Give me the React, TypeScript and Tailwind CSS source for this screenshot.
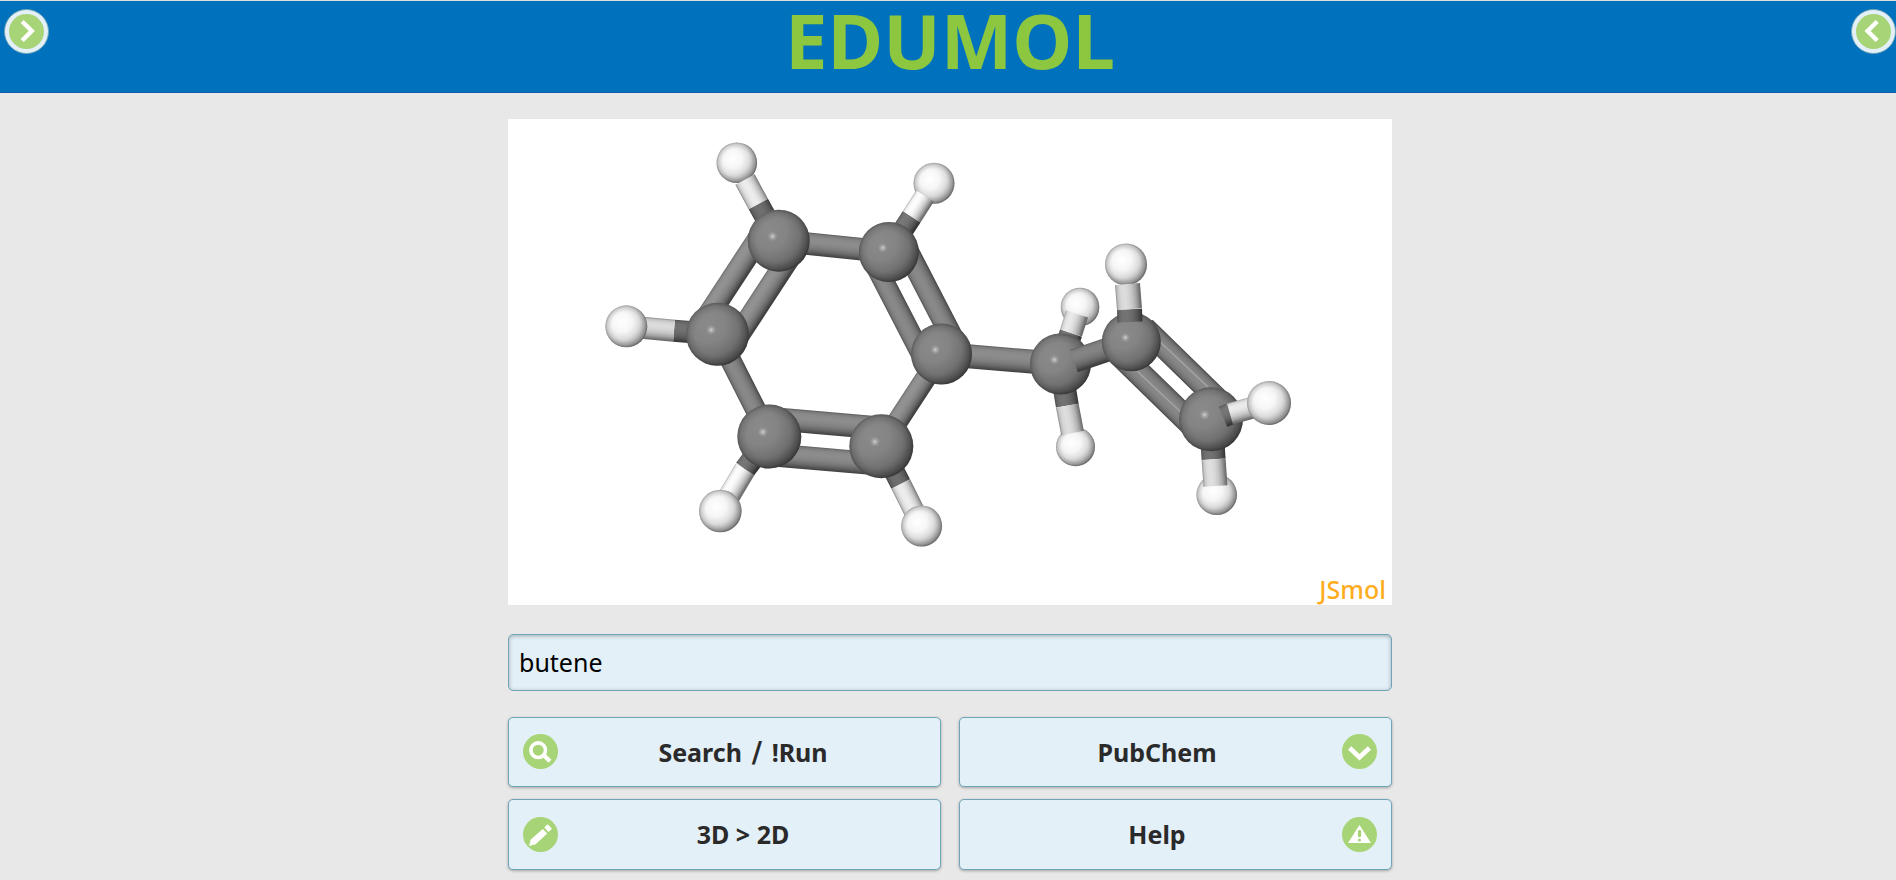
import React from "react";

type Point = { x: number; y: number };
type Atom = Point & { r: number; el: "C" | "H" };

const atoms: Record<string, Atom> = {
  c1: { x: 778.7, y: 240.7, r: 31, el: "C" },
  c2: { x: 888.8, y: 252, r: 30, el: "C" },
  c3: { x: 717.5, y: 334.3, r: 31.5, el: "C" },
  c4: { x: 941.5, y: 354, r: 30.5, el: "C" },
  c5: { x: 769.3, y: 436.5, r: 32, el: "C" },
  c6: { x: 881.3, y: 446.2, r: 32, el: "C" },
  c7: { x: 1060.5, y: 364, r: 30.5, el: "C" },
  c8: { x: 1131.3, y: 341.7, r: 29.5, el: "C" },
  c9: { x: 1211, y: 419.3, r: 32, el: "C" },
  h1: { x: 736.8, y: 162.7, r: 20.3, el: "H" },
  h2: { x: 934, y: 183.2, r: 20.5, el: "H" },
  h3: { x: 626.3, y: 326.3, r: 21, el: "H" },
  h4: { x: 720.3, y: 511, r: 21.3, el: "H" },
  h5: { x: 921.6, y: 526, r: 20.5, el: "H" },
  h6: { x: 1080, y: 307, r: 19.3, el: "H" },
  h7: { x: 1075.5, y: 446.7, r: 19.5, el: "H" },
  h8: { x: 1126, y: 264.4, r: 21, el: "H" },
  h9: { x: 1269, y: 403, r: 22, el: "H" },
  h10: { x: 1216.7, y: 494.7, r: 20.3, el: "H" },
};

const LIGHT = { x: -0.35, y: -0.35, z: 0.87 };

function tone(base: number, intensity: number) {
  const v = Math.min(255, Math.round(base * (0.42 + 0.56 * Math.max(0, intensity))));
  return `rgb(${v},${v},${v})`;
}

function Cylinder({ id, from, to, w, base, shift = 0 }: {
  id: string; from: Point; to: Point; w: number; base: number; shift?: number;
}) {
  const len = Math.hypot(to.x - from.x, to.y - from.y);
  const nx = -(to.y - from.y) / len;
  const ny = (to.x - from.x) / len;
  const h = w / 2;
  const a = { x: from.x + nx * shift, y: from.y + ny * shift };
  const b = { x: to.x + nx * shift, y: to.y + ny * shift };
  const stops = [-1, -0.85, -0.6, -0.3, 0, 0.3, 0.6, 0.85, 1];
  return (
    <>
      <linearGradient id={id} gradientUnits="userSpaceOnUse" x1={a.x - nx * h} y1={a.y - ny * h} x2={a.x + nx * h} y2={a.y + ny * h}>
        {stops.map((t) => (
          <stop key={t} offset={(t + 1) / 2} stopColor={tone(base, t * (nx * LIGHT.x + ny * LIGHT.y) + Math.sqrt(1 - t * t) * LIGHT.z)} />
        ))}
      </linearGradient>
      <polygon
        fill={`url(#${id})`}
        points={`${a.x - nx * h},${a.y - ny * h} ${b.x - nx * h},${b.y - ny * h} ${b.x + nx * h},${b.y + ny * h} ${a.x + nx * h},${a.y + ny * h}`}
      />
    </>
  );
}

function Bond({ a, b, w = 22.5, shift = 0 }: { a: string; b: string; w?: number; shift?: number }) {
  return <Cylinder id={`${a}${b}${shift}`} from={atoms[a]} to={atoms[b]} w={w} base={150} shift={shift} />;
}

function HBond({ c, h, mid, end, start, w = 22, base = 260 }: {
  c: string; h: string; mid: Point; end?: Point; start?: Point; w?: number; base?: number;
}) {
  return (
    <>
      <Cylinder id={`${c}${h}a`} from={start ?? atoms[c]} to={mid} w={w} base={122} />
      <Cylinder id={`${c}${h}b`} from={mid} to={end ?? atoms[h]} w={w} base={base} />
    </>
  );
}

function Ball({ a }: { a: string }) {
  const { x, y, r, el } = atoms[a];
  return (
    <g transform={`translate(${x} ${y}) scale(${r})`}>
      <circle r="1" fill={`url(#ball${el})`} />
      <circle r="1" fill="url(#rim)" />
      {el === "C" && <circle cx="-0.2" cy="-0.14" r="0.16" fill="url(#glint)" />}
    </g>
  );
}

function Molecule() {
  return (
    <svg viewBox="508 119 884 486" className="block w-full" role="img" aria-label="Molecule model">
      <defs>
        <radialGradient id="ballC" gradientUnits="userSpaceOnUse" cx="-0.3" cy="-0.3" r="1.4">
          <stop offset="0" stopColor="#8a8a8a" />
          <stop offset="0.4" stopColor="#848484" />
          <stop offset="0.7" stopColor="#727272" />
          <stop offset="1" stopColor="#4a4a4a" />
        </radialGradient>
        <radialGradient id="ballH" gradientUnits="userSpaceOnUse" cx="-0.2" cy="-0.2" r="1.35">
          <stop offset="0" stopColor="#ffffff" />
          <stop offset="0.35" stopColor="#f6f6f6" />
          <stop offset="0.6" stopColor="#dcdcdc" />
          <stop offset="0.85" stopColor="#a2a2a2" />
          <stop offset="1" stopColor="#747474" />
        </radialGradient>
        <radialGradient id="rim" gradientUnits="userSpaceOnUse" cx="0" cy="0" r="1">
          <stop offset="0.7" stopColor="#000" stopOpacity="0" />
          <stop offset="0.9" stopColor="#000" stopOpacity="0.1" />
          <stop offset="1" stopColor="#000" stopOpacity="0.28" />
        </radialGradient>
        <radialGradient id="glint">
          <stop offset="0" stopColor="#fff" stopOpacity="0.6" />
          <stop offset="0.5" stopColor="#fff" stopOpacity="0.2" />
          <stop offset="1" stopColor="#fff" stopOpacity="0" />
        </radialGradient>
      </defs>

      <Bond a="c1" b="c2" />
      <Bond a="c1" b="c3" shift={18} />
      <Bond a="c1" b="c3" shift={-18} />
      <Bond a="c2" b="c4" shift={18} w={21} />
      <Bond a="c2" b="c4" shift={-17} />
      <Bond a="c3" b="c5" w={21} />
      <Bond a="c5" b="c6" shift={-18} w={23} />
      <Bond a="c5" b="c6" shift={18} w={23} />
      <Bond a="c4" b="c6" w={21} />
      <Bond a="c4" b="c7" w={24} />
      <Bond a="c8" b="c9" shift={-19} w={23} />
      <Bond a="c8" b="c9" shift={17} w={25} />
      <path d="M1157 339 L1208 387 M1137 371 L1184 415" stroke="#a4a4a4" strokeWidth="1.5" />

      <Ball a="h1" />
      <HBond c="c1" h="h1" mid={{ x: 758.3, y: 204 }} end={{ x: 745, y: 179.5 }} />
      <HBond c="c3" h="h3" mid={{ x: 674, y: 330.7 }} base={235} />
      <HBond c="c5" h="h4" mid={{ x: 745, y: 469.3 }} />
      <HBond c="c6" h="h5" mid={{ x: 900.7, y: 484 }} w={21} />
      <Ball a="h3" />
      <Ball a="h4" />
      <Ball a="h5" />
      <Ball a="h2" />
      <Ball a="h6" />
      <Ball a="h7" />
      <Ball a="h8" />
      <Ball a="h10" />
      <HBond c="c2" h="h2" mid={{ x: 911.7, y: 216.7 }} end={{ x: 925, y: 196 }} w={21} />
      <HBond c="c7" h="h6" mid={{ x: 1071, y: 333 }} end={{ x: 1077, y: 314 }} w={23} base={242} />
      <HBond c="c7" h="h7" mid={{ x: 1067.3, y: 405.7 }} end={{ x: 1072.5, y: 433 }} w={23} base={238} />
      <HBond c="c9" h="h10" mid={{ x: 1213.6, y: 459.3 }} end={{ x: 1215.5, y: 486 }} w={24} base={238} />

      <Ball a="c1" />
      <Ball a="c2" />
      <Ball a="c3" />
      <Ball a="c4" />
      <Ball a="c5" />
      <Ball a="c6" />
      <Ball a="c7" />
      <Cylinder id="c7c8" from={{ x: 1074, y: 361 }} to={atoms.c8} w={24} base={138} />
      <Ball a="c8" />
      <HBond c="c8" h="h8" start={{ x: 1130, y: 322 }} mid={{ x: 1129.5, y: 309.3 }} end={{ x: 1127.5, y: 284 }} w={25} base={235} />
      <Ball a="c9" />
      <HBond c="c9" h="h9" start={{ x: 1223, y: 417 }} mid={{ x: 1230, y: 414 }} w={22} base={245} />
      <Ball a="h9" />
    </svg>
  );
}

type IconName = "right" | "left" | "down" | "search" | "pencil" | "alert";

const glyphs: Record<IconName, React.ReactNode> = {
  right: <path d="M13.2 7.5 L22.8 17 L13.2 26.5" stroke="#fff" strokeWidth="4.4" fill="none" />,
  left: <path d="M21.2 7.5 L11.6 17 L21.2 26.5" stroke="#fff" strokeWidth="4.4" fill="none" />,
  down: <path d="M7.6 14 L17.5 23.3 L27.4 14" stroke="#fff" strokeWidth="4.6" fill="none" />,
  search: (
    <g stroke="#fff" fill="none">
      <circle cx="15.2" cy="16.2" r="7.3" strokeWidth="3.6" />
      <path d="M20 20.5 L27 27.3" strokeWidth="4.2" />
    </g>
  ),
  pencil: <path fill="#fff" d="M24.7 7.3 L29 11.8 L25.6 15 L21.2 10.5 Z M19.8 12 L24.2 16.4 L12.6 27.3 L6 29 L7.8 22.6 Z" />,
  alert: (
    <>
      <path fill="#fff" d="M17.5 8 L29 26 H6 Z" />
      <rect x="15.9" y="13" width="3.2" height="7.2" rx="1.4" fill="#a7d477" />
      <circle cx="17.5" cy="23" r="1.6" fill="#a7d477" />
    </>
  ),
};

function Icon({ name }: { name: IconName }) {
  return (
    <svg viewBox="0 0 35 35" className="size-[35px] shrink-0" aria-hidden="true">
      <circle cx="17.5" cy="17.5" r="17.5" fill="#a7d477" />
      {glyphs[name]}
    </svg>
  );
}

function PanelButton({ name, label }: { name: IconName; label: string }) {
  return (
    <button aria-label={label} className="flex size-[45px] items-center justify-center rounded-full border border-[#6fa5b9] bg-[#e4f0f8]">
      <Icon name={name} />
    </button>
  );
}

function Action({ icon, side = "left", children }: { icon: IconName; side?: "left" | "right"; children: React.ReactNode }) {
  return (
    <button className="flex items-center gap-[2px] rounded-[5px] border border-[#6fa5b9] bg-[#e4f0f8] px-[14px] pb-[1px] text-[25px] leading-[34px] font-bold text-[#2a2a2a] shadow-[0_1px_3px_rgba(0,0,0,0.3)]">
      {side === "left" && <Icon name={icon} />}
      <span className="flex-1">{children}</span>
      {side === "right" && <Icon name={icon} />}
    </button>
  );
}

export default function App() {
  return (
    <div className="min-h-screen bg-[#e8e8e8] font-['Noto_Sans',sans-serif]">
      <header className="flex h-[93px] items-start justify-between border-t border-b border-t-[#dddddd] border-b-[#0c5fa8] bg-[#0071bc] pl-1">
        <div className="pt-2">
          <PanelButton name="right" label="Open left panel" />
        </div>
        <h1 className="text-[76px] leading-[78px] font-bold text-[#8dc63f]">EDUMOL</h1>
        <div className="pt-2">
          <PanelButton name="left" label="Open right panel" />
        </div>
      </header>
      <main className="pt-[26px] pl-1">
        <div className="mx-auto w-full max-w-[884px]">
          <div className="relative bg-white">
            <Molecule />
            <a href="#jsmol" className="absolute right-[6px] bottom-0 text-[25px] leading-8 font-medium text-[#ffad1f]">JSmol</a>
          </div>
          <input
            aria-label="Molecule name"
            defaultValue="butene"
            className="mt-[29px] block h-[57px] w-full rounded-[5px] border border-[#6fa5b9] bg-[#e4f0f8] px-[10px] pb-[2px] text-[25px] text-black shadow-[inset_0_1px_4px_rgba(0,0,0,0.3)] outline-none"
          />
          <div className="mt-[26px] grid grid-cols-2 grid-rows-[70px_71px] gap-x-[18px] gap-y-3">
            <Action icon="search">
              Search<span className="font-['DejaVu_Sans',sans-serif] text-[28px] leading-none"> / </span>!Run
            </Action>
            <Action icon="down" side="right">PubChem</Action>
            <Action icon="pencil">3D &gt; 2D</Action>
            <Action icon="alert" side="right">Help</Action>
          </div>
        </div>
      </main>
    </div>
  );
}
